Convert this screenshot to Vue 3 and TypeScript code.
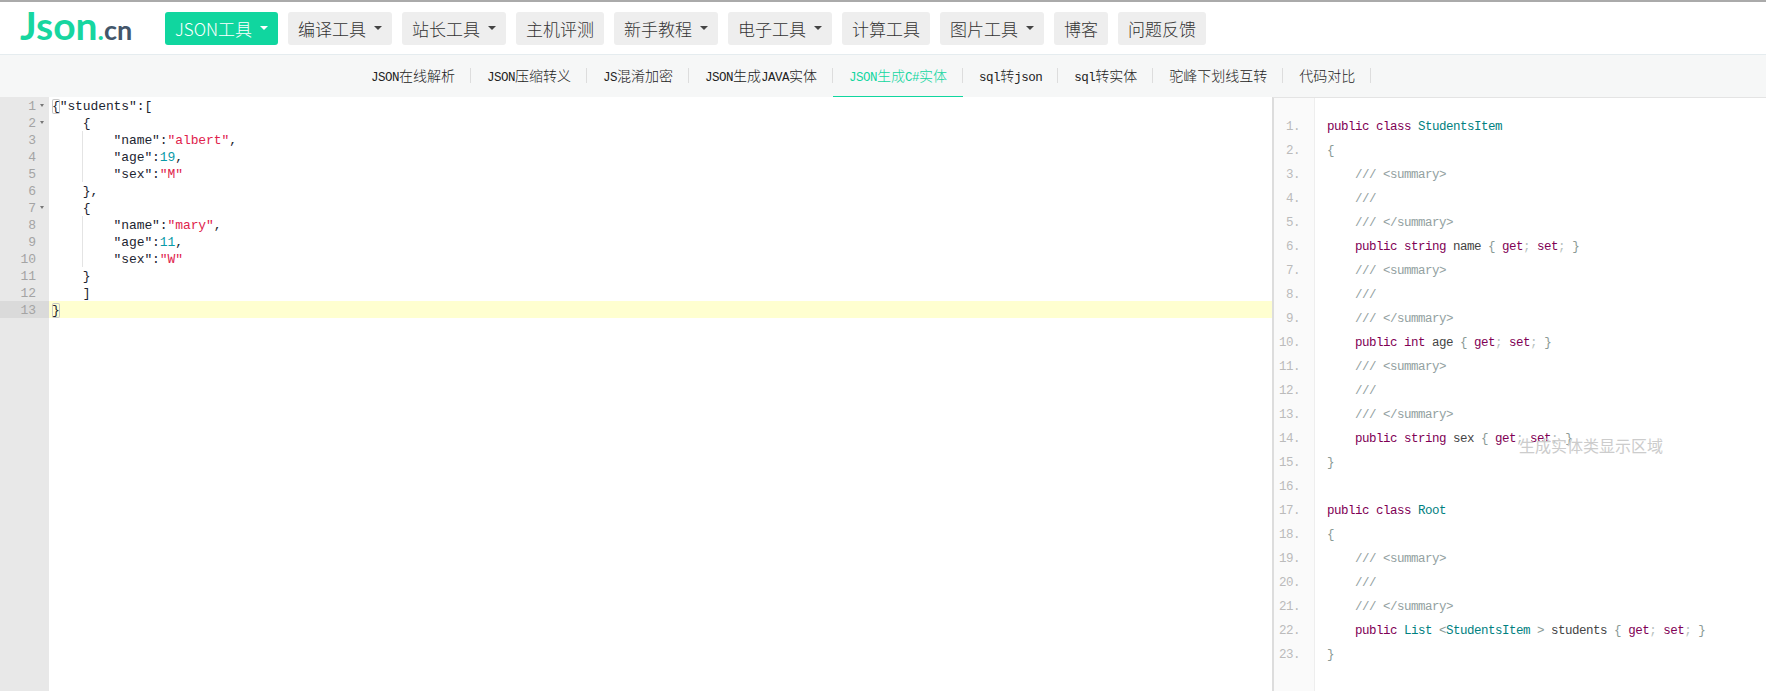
<script setup lang="ts">
type Tok = [string, string]

const navItems = [
  { label: 'JSON工具', caret: true, active: true },
  { label: '编译工具', caret: true },
  { label: '站长工具', caret: true },
  { label: '主机评测' },
  { label: '新手教程', caret: true },
  { label: '电子工具', caret: true },
  { label: '计算工具' },
  { label: '图片工具', caret: true },
  { label: '博客' },
  { label: '问题反馈' }
]

const subItems = [
  { label: 'JSON在线解析' },
  { label: 'JSON压缩转义' },
  { label: 'JS混淆加密' },
  { label: 'JSON生成JAVA实体' },
  { label: 'JSON生成C#实体', active: true },
  { label: 'sql转json' },
  { label: 'sql转实体' },
  { label: '驼峰下划线互转' },
  { label: '代码对比' }
]

function parts(s: string) {
  return s.match(/[\x00-\x7f]+|[^\x00-\x7f]+/g) ?? []
}
function isLatin(s: string) {
  return /^[\x00-\x7f]/.test(s)
}

const foldLines = [1, 2, 7]
const gutterLines = Array.from({ length: 13 }, (_, i) => i + 1)

const sourceLines: { guide?: boolean; active?: boolean; toks: Tok[] }[] = [
  { toks: [['box', '{'], ['', '"students":[']] },
  { toks: [['', '    {']] },
  { guide: true, toks: [['', '        "name":'], ['str', '"albert"'], ['', ',']] },
  { guide: true, toks: [['', '        "age":'], ['num', '19'], ['', ',']] },
  { guide: true, toks: [['', '        "sex":'], ['str', '"M"']] },
  { toks: [['', '    },']] },
  { toks: [['', '    {']] },
  { guide: true, toks: [['', '        "name":'], ['str', '"mary"'], ['', ',']] },
  { guide: true, toks: [['', '        "age":'], ['num', '11'], ['', ',']] },
  { guide: true, toks: [['', '        "sex":'], ['str', '"W"']] },
  { toks: [['', '    }']] },
  { toks: [['', '    ]']] },
  { active: true, toks: [['box', '}']] }
]

const cls = (name: string): Tok[] => [['kw', 'public class '], ['typ', name]]
const open: Tok[] = [['pun', '{']]
const close: Tok[] = [['pun', '}']]
const c1: Tok[] = [['com', '    /// <summary>']]
const c2: Tok[] = [['com', '    ///']]
const c3: Tok[] = [['com', '    /// </summary>']]
const accessors: Tok[] = [
  ['pun', ' { '], ['kw', 'get'], ['lit', '; '], ['kw', 'set'], ['lit', '; '], ['pun', '}']
]
const prop = (t: string, n: string): Tok[] => [
  ['kw', '    public ' + t + ' '], ['pln', n], ...accessors
]

const outputLines: Tok[][] = [
  cls('StudentsItem'), open,
  c1, c2, c3, prop('string', 'name'),
  c1, c2, c3, prop('int', 'age'),
  c1, c2, c3, prop('string', 'sex'),
  close, [],
  cls('Root'), open,
  c1, c2, c3,
  [['kw', '    public '], ['typ', 'List '], ['pun', '<'], ['typ', 'StudentsItem '], ['pun', '> '], ['pln', 'students'], ...accessors],
  close
]
</script>

<template>
  <div class="page">
    <header class="topbar">
      <a class="logo"><span class="logo-main">Json</span><span class="logo-dot">.</span><span class="logo-cn">cn</span></a>
      <nav class="nav">
        <a v-for="item in navItems" :key="item.label" class="nav-btn" :class="{ active: item.active }">
          {{ item.label }}<i v-if="item.caret" class="caret"></i>
        </a>
      </nav>
    </header>

    <div class="subnav">
      <a v-for="item in subItems" :key="item.label" class="sub-item" :class="{ active: item.active }"><template v-for="(p, i) in parts(item.label)" :key="i"><span v-if="isLatin(p)" class="sub-latin">{{ p }}</span><span v-else>{{ p }}</span></template></a>
    </div>

    <main class="workspace">
      <section class="editor">
        <div class="gutter">
          <div v-for="n in gutterLines" :key="n" class="gutter-row" :class="{ current: n === 13 }">
            <span class="line-no">{{ n }}</span>
            <i v-if="foldLines.includes(n)" class="fold"></i>
          </div>
        </div>
        <div class="source">
          <div
            v-for="(line, i) in sourceLines"
            :key="i"
            class="source-row"
            :class="{ guide: line.guide, current: line.active }"
          ><span v-for="(t, j) in line.toks" :key="j" :class="t[0]">{{ t[1] }}</span></div>
        </div>
      </section>

      <section class="output">
        <div class="output-gutter">
          <div v-for="(_, i) in outputLines" :key="i" class="output-no">{{ i + 1 }}.</div>
        </div>
        <div class="output-code">
          <div v-for="(line, i) in outputLines" :key="i" class="output-row"><span v-for="(t, j) in line" :key="j" :class="t[0]">{{ t[1] }}</span></div>
        </div>
        <div class="watermark">生成实体类显示区域</div>
      </section>
    </main>
  </div>
</template>

<style>
html, body { margin: 0; background: #fff; overflow: hidden; }
</style>

<style scoped>
.page {
  width: 1766px;
  height: 691px;
  display: flex;
  flex-direction: column;
  overflow: hidden;
  font-family: "Noto Sans CJK SC", sans-serif;
}
.topbar {
  height: 52px;
  flex: none;
  display: flex;
  align-items: center;
  padding-left: 20px;
  border-top: 2px solid #aaa;
  border-bottom: 1px solid #e5ecef;
}
.logo {
  width: 145px;
  flex: none;
  padding-top: 3px;
  font-family: "Lato", sans-serif;
  font-weight: 700;
  white-space: nowrap;
  line-height: 40px;
}
.logo-main { font-size: 39px; color: #17d6a0; }
.logo-dot { font-size: 27px; color: #17d6a0; }
.logo-cn { font-size: 27px; color: #43566a; }
.nav { display: flex; gap: 10px; }
.nav-btn {
  height: 33px;
  display: flex;
  align-items: center;
  padding: 0 10px;
  background: #eee;
  border-radius: 3px;
  color: #333;
  font-size: 17px;
  font-weight: 300;
  white-space: nowrap;
}
.nav-btn.active { background: #10d69f; color: #fff; }
.caret {
  width: 0;
  height: 0;
  margin-left: 8px;
  border-left: 4px solid transparent;
  border-right: 4px solid transparent;
  border-top: 4px solid #444;
}
.active .caret { border-top-color: #fff; }

.subnav {
  height: 42px;
  flex: none;
  display: flex;
  padding-left: 355px;
  background: #f6f7f7;
}
.sub-item {
  position: relative;
  height: 42px;
  line-height: 41px;
  padding: 0 16px;
  font-size: 14px;
  font-weight: 300;
  color: #222;
  white-space: pre;
  box-sizing: border-box;
}
.sub-item::after {
  content: "";
  position: absolute;
  right: 0;
  top: 13px;
  height: 15px;
  width: 1px;
  background: #ddd;
}
.sub-item.active { color: #10d69f; }
.sub-item.active::before {
  content: "";
  position: absolute;
  left: 0;
  right: 0;
  bottom: 0;
  height: 1px;
  background: #10d69f;
}
.sub-latin {
  font-family: "Liberation Mono", monospace;
  font-size: 12.5px;
  font-weight: 400;
  letter-spacing: -0.5px;
}

.workspace { flex: 1; display: flex; min-height: 0; }
.editor {
  width: 1272px;
  flex: none;
  display: flex;
  font-family: "Liberation Mono", monospace;
  font-size: 13px;
  line-height: 17px;
  letter-spacing: -0.1px;
  color: #1c2430;
}
.gutter { width: 49px; flex: none; background: #e8e8e8; color: #a4a4a4; }
.gutter-row { height: 17px; padding-top: 1px; box-sizing: border-box; display: flex; align-items: center; position: relative; }
.gutter-row.current { background: #dadada; }
.line-no { width: 36px; text-align: right; flex: none; }
.fold {
  position: absolute;
  left: 40px;
  top: 7px;
  width: 0;
  height: 0;
  border-left: 2.5px solid transparent;
  border-right: 2.5px solid transparent;
  border-top: 3px solid #777;
}
.source { flex: 1; min-width: 0; }
.source-row {
  height: 17px;
  padding: 1px 0 0 3px;
  box-sizing: border-box;
  white-space: pre;
}
.source-row.guide {
  background: linear-gradient(#e4e4e4, #e4e4e4) no-repeat 33px 0 / 1px 100%;
}
.source-row.current { background: #ffffd0; }
.box { box-shadow: inset 0 0 0 1px #c8c8c8; border-radius: 2px; }
.str { color: #e0224c; }
.num { color: #0a9aa8; }

.output {
  flex: 1;
  min-width: 0;
  position: relative;
  display: flex;
  border-left: 2px solid #ddd;
  border-top: 1px solid #e4e4e4;
  font-family: "Liberation Mono", monospace;
  font-size: 12.5px;
  letter-spacing: -0.5px;
  line-height: 24px;
}
.output-gutter {
  width: 40px;
  flex: none;
  padding-top: 17px;
  background: #fafafa;
  border-right: 1px solid #eee;
  color: #bbb;
}
.output-no { height: 24px; text-align: right; padding-right: 14px; }
.output-code { flex: 1; padding: 17px 0 0 12px; min-width: 0; }
.output-row { height: 24px; white-space: pre; }
.kw { color: #7f0055; }
.typ { color: #008080; }
.com { color: #93a1a1; }
.pun { color: #8a9a95; }
.lit { color: #b8c2c0; }
.pln { color: #444; }
.watermark {
  position: absolute;
  left: 245px;
  top: 335px;
  font-family: "Noto Sans CJK SC", sans-serif;
  font-size: 16px;
  letter-spacing: 0;
  color: #ccc;
  white-space: nowrap;
}
</style>
